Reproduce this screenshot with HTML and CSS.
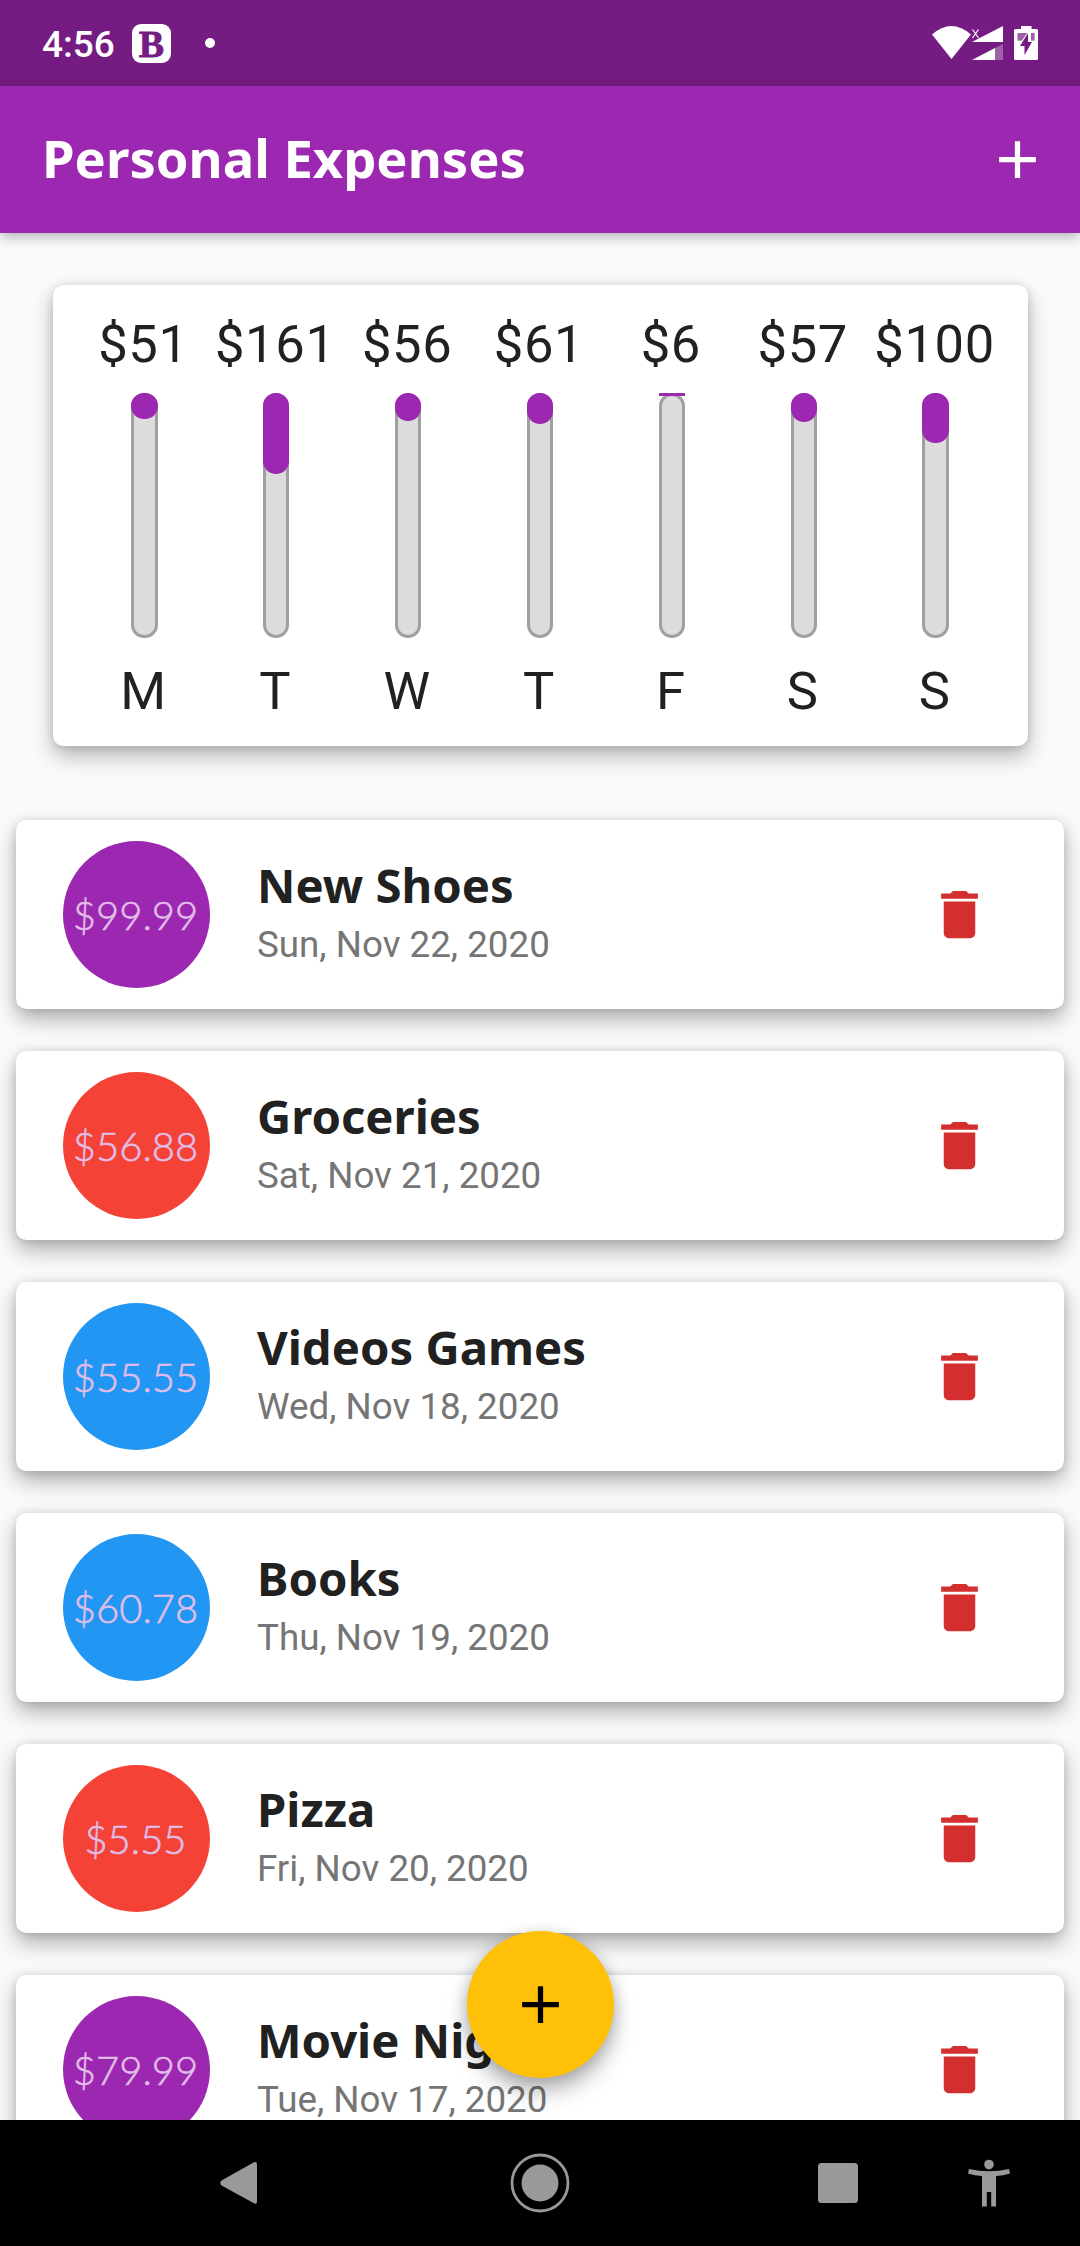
FILE: index.html
```html
<!DOCTYPE html>
<html lang="en">
<head>
<meta charset="utf-8">
<title>Personal Expenses</title>
<link rel="stylesheet" href="styles.css">
</head>
<body>
<div class="screen">
  <header class="status">
    <span class="clock">4:56</span>
    <span class="badge">B</span>
    <span class="dot"></span>
    <svg class="status-icons" width="108" height="36" viewBox="931 25 108 36" fill="#fff">
      <path d="M932 34.500Q951.500 17.500 971 34.500L951.500 59Z"/>
      <path d="M972 42L1003 26V42Z"/>
      <path d="M972 60L995 48V60Z"/><path d="M995 48L1003 44V60H995Z" opacity=".3"/>
      <path d="M972.500 29.500L978.500 38M978.500 29.500L972.500 38" stroke="#fff" stroke-width="1.200"/>
      <path fill-rule="evenodd" d="M1021 26H1031.500V29H1036.500Q1038 29 1038 30.500V58.500Q1038 60 1036.500 60H1015.500Q1014 60 1014 58.500V30.500Q1014 29 1015.500 29H1021ZM1028 33L1020 46H1024.500V55L1032 42H1028ZM1017.500 33V40.500H1022L1027 33ZM1031 33V40.500H1034.500V33Z"/>
      <path d="M1017.500 33V40.500H1022L1027 33ZM1031 33V40.500H1034.500V33Z" opacity=".3"/>
    </svg>
  </header>
  <div class="appbar">
    <h1>Personal Expenses</h1>
    <svg class="icon" viewBox="0 0 24 24" fill="#fff"><path d="M19 13h-6v6h-2v-6H5v-2h6V5h2v6h6v2z"/></svg>
  </div>
  <main class="content">
    <section class="chart">
      <div class="day"><span>$51</span><div class="bar"><i style="height:25.5px"></i></div><span>M</span></div>
      <div class="day"><span>$161</span><div class="bar"><i style="height:80.5px"></i></div><span>T</span></div>
      <div class="day"><span>$56</span><div class="bar"><i style="height:28px"></i></div><span>W</span></div>
      <div class="day"><span>$61</span><div class="bar"><i style="height:30.5px"></i></div><span>T</span></div>
      <div class="day"><span>$6</span><div class="bar"><i class="flat" style="height:3px"></i></div><span>F</span></div>
      <div class="day"><span>$57</span><div class="bar"><i style="height:28.5px"></i></div><span>S</span></div>
      <div class="day"><span>$100</span><div class="bar"><i style="height:50px"></i></div><span>S</span></div>
    </section>
    <ul class="list">
      <li class="item"><span class="amount purple">$99.99</span><div class="info"><h2>New Shoes</h2><p>Sun, Nov 22, 2020</p></div><svg class="icon trash" viewBox="0 0 24 24"><path d="M6 19c0 1.100.9 2 2 2h8c1.100 0 2-.9 2-2V7H6v12zM19 4h-3.500l-1-1h-5l-1 1H5v2h14V4z"/></svg></li>
      <li class="item"><span class="amount red">$56.88</span><div class="info"><h2>Groceries</h2><p>Sat, Nov 21, 2020</p></div><svg class="icon trash" viewBox="0 0 24 24"><path d="M6 19c0 1.100.9 2 2 2h8c1.100 0 2-.9 2-2V7H6v12zM19 4h-3.500l-1-1h-5l-1 1H5v2h14V4z"/></svg></li>
      <li class="item"><span class="amount blue">$55.55</span><div class="info"><h2>Videos Games</h2><p>Wed, Nov 18, 2020</p></div><svg class="icon trash" viewBox="0 0 24 24"><path d="M6 19c0 1.100.9 2 2 2h8c1.100 0 2-.9 2-2V7H6v12zM19 4h-3.500l-1-1h-5l-1 1H5v2h14V4z"/></svg></li>
      <li class="item"><span class="amount blue">$60.78</span><div class="info"><h2>Books</h2><p>Thu, Nov 19, 2020</p></div><svg class="icon trash" viewBox="0 0 24 24"><path d="M6 19c0 1.100.9 2 2 2h8c1.100 0 2-.9 2-2V7H6v12zM19 4h-3.500l-1-1h-5l-1 1H5v2h14V4z"/></svg></li>
      <li class="item"><span class="amount red">$5.55</span><div class="info"><h2>Pizza</h2><p>Fri, Nov 20, 2020</p></div><svg class="icon trash" viewBox="0 0 24 24"><path d="M6 19c0 1.100.9 2 2 2h8c1.100 0 2-.9 2-2V7H6v12zM19 4h-3.500l-1-1h-5l-1 1H5v2h14V4z"/></svg></li>
      <li class="item"><span class="amount purple">$79.99</span><div class="info"><h2>Movie Night</h2><p>Tue, Nov 17, 2020</p></div><svg class="icon trash" viewBox="0 0 24 24"><path d="M6 19c0 1.100.9 2 2 2h8c1.100 0 2-.9 2-2V7H6v12zM19 4h-3.500l-1-1h-5l-1 1H5v2h14V4z"/></svg></li>
    </ul>
    <button class="fab" aria-label="Add expense"><svg class="icon" viewBox="0 0 24 24"><path d="M19 13h-6v6h-2v-6H5v-2h6V5h2v6h6v2z"/></svg></button>
  </main>
  <nav class="navbar">
    <svg width="40" height="60" viewBox="0 0 40 60"><path d="M2.500 27.500L34.500 9.500Q38 8 38 11.500V48.500Q38 52 34.500 50L2.500 32.500Q0 30 2.500 27.500Z"/></svg>
    <svg width="60" height="60" viewBox="0 0 60 60"><circle cx="30" cy="30" r="18.500"/><circle cx="30" cy="30" r="28" fill="none" stroke="#999" stroke-width="2.800"/></svg>
    <svg width="40" height="40" viewBox="0 0 40 40"><rect width="40" height="40" rx="3.500"/></svg>
    <svg width="42" height="48" viewBox="0 0 42 48"><circle cx="21" cy="5.500" r="4.800"/><path d="M1 10Q21 14.500 41 10L42 14.500Q35 16.500 28 17V47.500H23.200V33H18.800V47.500H14V17Q7 16.500 0 14.500Z"/></svg>
  </nav>
</div>
</body>
</html>
```
FILE: styles.css
```css
* { box-sizing: border-box; margin: 0; padding: 0; }
body { background: #fafafa; font-family: Roboto, sans-serif; color: #212121; }
.screen { width: 1080px; height: 2246px; display: flex; flex-direction: column; overflow: hidden; }
.status { height: 86px; flex: none; display: flex; align-items: center; background: #741c82; color: #fff; padding: 0 41px 0 42px; }
.clock { width: 90px; font-size: 37px; font-weight: 500; line-height: 44px; padding-top: 4px; }
.badge { width: 39px; height: 39px; border-radius: 9px; background: #fff; color: #741c82; font: bold 38px/41px "Liberation Serif", serif; text-align: center; -webkit-text-stroke: .8px #741c82; }
.dot { width: 10px; height: 10px; border-radius: 50%; background: #fff; margin-left: 34px; }
.status-icons { margin-left: auto; }
.appbar { height: 147px; flex: none; display: flex; align-items: center; justify-content: space-between; background: #9c27b0; color: #fff; padding: 0 31.500px 0 42px; box-shadow: 0 4px 12px rgba(0,0,0,.28); position: relative; z-index: 1; }
.appbar h1 { font: bold 52.500px/72px "Noto Sans", sans-serif; padding-bottom: 3px; }
.icon { width: 63px; height: 63px; flex: none; display: block; }
.content { flex: 1; min-height: 0; position: relative; overflow: hidden; }
.chart { display: flex; margin: 52px 52.500px 0; height: 461px; padding: 28px 26px 24px; background: #fff; border-radius: 10.500px; box-shadow: 0 10px 21px rgba(0,0,0,.28), 0 1px 10px rgba(0,0,0,.12); }
.day { flex: 1 0 0; width: 0; display: flex; flex-direction: column; align-items: center; font-size: 52.500px; line-height: 62px; white-space: nowrap; letter-spacing: .66px; }
.day span { padding-right: 2px; }
.bar { width: 26.250px; height: 246px; margin: 18px 0 22px; border: 3px solid #a0a0a0; border-radius: 13px; background: #dcdcdc; }
.bar i { display: block; width: 26.250px; margin: -3px 0 0 -3px; background: #9c27b0; border-radius: 13px; }
.bar .flat { border-radius: 0; }
.list { list-style: none; margin-top: 74px; padding: 0 16px; display: flex; flex-direction: column; gap: 42px; }
.item { height: 189px; flex: none; display: flex; align-items: center; padding: 0 73px 0 47px; background: #fff; border-radius: 10.500px; box-shadow: 0 10px 21px rgba(0,0,0,.3), 0 1px 10px rgba(0,0,0,.12); }
.amount { width: 147px; height: 147px; flex: none; border-radius: 50%; font: 300 40px/149px Lato, sans-serif; text-align: center; padding-right: 2px; color: #e1bee7; white-space: nowrap; -webkit-text-stroke: .6px #e1bee7; }
.purple { background: #9c27b0; }
.red { background: #f44336; }
.blue { background: #2196f3; }
.info { flex: 1; margin-left: 47px; padding-bottom: 10px; }
.info h2 { font: bold 47.250px/64px "Noto Sans", sans-serif; margin-bottom: 6px; white-space: nowrap; }
.info p { font-size: 36.750px; line-height: 44px; color: #757575; }
.trash { fill: #d32f2f; }
.fab { position: absolute; left: 466.500px; bottom: 42px; width: 147px; height: 147px; border: 0; border-radius: 50%; background: #ffc107; display: flex; align-items: center; justify-content: center; box-shadow: 0 14px 22px rgba(0,0,0,.25), 0 3px 16px rgba(0,0,0,.18); }
.navbar { height: 126px; flex: none; display: grid; grid-template-columns: 291px 308px 150px 42px; align-items: center; background: #000; padding-left: 219px; }
.navbar svg { fill: #999; }
```
